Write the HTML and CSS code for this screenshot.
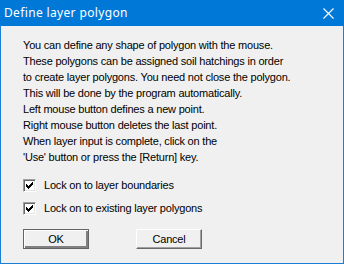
FILE: index.html
```html
<!DOCTYPE html>
<html>
<head>
<meta charset="utf-8">
<link rel="stylesheet" href="styles.css">
</head>
<body>
<div class="window">
  <div class="titlebar">
    <span class="title">Define layer polygon</span>
    <svg class="close" width="11" height="11" viewBox="0 0 11 11"><path d="M0.5 0.5L10.5 10.5M10.5 0.5L0.5 10.5" stroke="#fff" stroke-width="1.1" fill="none"/></svg>
  </div>
  <div class="client">
    <div class="info">
      <div>You can define any shape of polygon with the mouse.</div>
      <div>These polygons can be assigned soil hatchings in order</div>
      <div>to create layer polygons. You need not close the polygon.</div>
      <div>This will be done by the program automatically.</div>
      <div>Left mouse button defines a new point.</div>
      <div>Right mouse button deletes the last point.</div>
      <div>When layer input is complete, click on the</div>
      <div>'Use' button or press the [Return] key.</div>
    </div>
    <div class="checks">
      <label class="check"><span class="box"><svg width="7" height="7" viewBox="0 0 7 7"><path d="M0 2h1v1h1v1h1v-1h1v-1h1v-1h1v-1h1v3h-1v1h-1v1h-1v1h-1v1h-1v-1h-1v-1h-1z" fill="#000"/></svg></span><span>Lock on to layer boundaries</span></label>
      <label class="check"><span class="box"><svg width="7" height="7" viewBox="0 0 7 7"><path d="M0 2h1v1h1v1h1v-1h1v-1h1v-1h1v-1h1v3h-1v1h-1v1h-1v1h-1v1h-1v-1h-1v-1h-1z" fill="#000"/></svg></span><span>Lock on to existing layer polygons</span></label>
    </div>
    <div class="buttons">
      <button class="btn default">OK</button>
      <button class="btn">Cancel</button>
    </div>
  </div>
</div>
</body>
</html>
```
FILE: styles.css
```css
html, body {
  margin: 0;
  padding: 0;
  background: #f0f0f0;
}
.window {
  width: 344px;
  height: 264px;
  box-sizing: border-box;
  border: 1px solid #1a7fd3;
  border-top: 0;
  background: #f0f0f0;
  display: flex;
  flex-direction: column;
}
.titlebar {
  height: 26px;
  background: #0078d7;
  display: flex;
  align-items: center;
  justify-content: space-between;
  padding: 0 10px 1px 4px;
  box-sizing: border-box;
  margin: 0 -1px;
}
.title {
  color: #fff;
  font-family: "Noto Sans", "Open Sans", sans-serif;
  font-size: 12px;
  letter-spacing: 0.35px;
}
.close {
  display: block;
  margin-top: 1px;
}
.client {
  padding: 11px 0 0 22px;
  font-family: "Liberation Sans", Arial, sans-serif;
  font-size: 11px;
  letter-spacing: -0.2px;
  color: #000;
  display: flex;
  flex-direction: column;
}
.info div {
  line-height: 16px;
  height: 16px;
  white-space: nowrap;
}
.checks {
  margin-top: 14px;
  display: flex;
  flex-direction: column;
  gap: 10px;
}
.check {
  display: flex;
  align-items: center;
  gap: 8px;
  height: 13px;
  line-height: 13px;
}
.box {
  width: 13px;
  height: 13px;
  box-sizing: border-box;
  border: 1px solid;
  border-color: #a0a0a0 #ffffff #ffffff #a0a0a0;
  box-shadow: inset 1px 1px #696969, inset -1px -1px #e3e3e3;
  background: #fff;
  display: flex;
  align-items: center;
  justify-content: center;
}
.box svg {
  display: block;
}
.buttons {
  margin-top: 14px;
  display: flex;
  gap: 47px;
}
.btn {
  width: 66px;
  height: 20px;
  box-sizing: border-box;
  padding: 0;
  margin: 0;
  font-family: "Liberation Sans", Arial, sans-serif;
  font-size: 11px;
  letter-spacing: -0.2px;
  color: #000;
  background: #f0f0f0;
  border: 1px solid;
  border-color: #ffffff #696969 #696969 #ffffff;
  box-shadow: inset -1px -1px #a0a0a0;
}
.btn.default {
  border-color: #646464;
  box-shadow: inset 1px 1px #ffffff, inset -2px -2px #808080;
}
```
